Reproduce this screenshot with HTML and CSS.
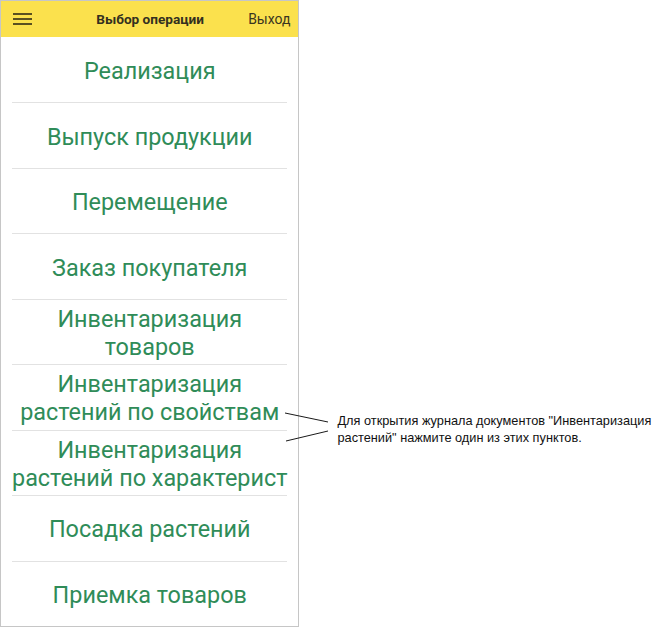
FILE: index.html
```html
<!DOCTYPE html>
<html lang="ru">
<head>
<meta charset="utf-8">
<link rel="stylesheet" href="styles.css">
</head>
<body>
<div class="page">
  <div class="phone">
    <div class="header">
      <div class="burger"><span></span><span></span><span></span></div>
      <div class="title">Выбор операции</div>
      <div class="exit">Выход</div>
    </div>
    <div class="menu">
      <div class="item">Реализация</div>
      <div class="item">Выпуск продукции</div>
      <div class="item">Перемещение</div>
      <div class="item">Заказ покупателя</div>
      <div class="item">Инвентаризация<br>товаров</div>
      <div class="item">Инвентаризация<br>растений по свойствам</div>
      <div class="item">Инвентаризация<br>растений по характерист</div>
      <div class="item">Посадка растений</div>
      <div class="item">Приемка товаров</div>
    </div>
  </div>
  <div class="note">Для открытия журнала документов "Инвентаризация растений" нажмите один из этих пунктов.</div>
  <svg class="leaders" width="656" height="627" viewBox="0 0 656 627">
    <line x1="285" y1="413" x2="328" y2="422" stroke="#1a1a1a" stroke-width="1"/>
    <line x1="286" y1="441" x2="328" y2="431" stroke="#1a1a1a" stroke-width="1"/>
  </svg>
</div>
</body>
</html>
```
FILE: styles.css
```css
html, body {
  margin: 0;
  padding: 0;
  background: #ffffff;
}
.page {
  position: relative;
  width: 656px;
  height: 627px;
  display: flex;
  align-items: flex-start;
}
.phone {
  width: 298px;
  height: 625px;
  border: 1px solid #c6c6c6;
  display: flex;
  flex-direction: column;
  background: #fff;
}
.header {
  height: 36px;
  flex: none;
  background: #fbe14d;
  display: flex;
  align-items: center;
  padding: 0 8px 0 12px;
  font-family: Roboto, "Noto Sans", sans-serif;
  color: #333020;
}
.burger {
  width: 19px;
  display: flex;
  flex-direction: column;
  gap: 3px;
}
.burger span {
  display: block;
  height: 2px;
  background: #5a5020;
}
.title {
  flex: 1;
  text-align: center;
  font-weight: bold;
  font-size: 13.6px;
  padding-left: 20px;
}
.exit {
  font-size: 14px;
  color: #3a3520;
}
.menu {
  flex: 1;
  display: flex;
  flex-direction: column;
  padding: 1px 11px 0;
}
.item {
  flex: 1;
  display: flex;
  align-items: center;
  justify-content: center;
  text-align: center;
  padding-top: 2px;
  border-bottom: 1px solid #e2e2e2;
  font-family: Roboto, "Noto Sans", sans-serif;
  font-size: 23.4px;
  line-height: 28px;
  color: #2f8c58;
  white-space: nowrap;
}
.item:last-child {
  border-bottom: none;
}
.note {
  margin-left: 38px;
  margin-top: 412px;
  width: 320px;
  font-family: "Liberation Sans", Arial, sans-serif;
  font-size: 12.75px;
  line-height: 17px;
  color: #111;
}
.leaders {
  position: absolute;
  left: 0;
  top: 0;
  pointer-events: none;
}
```
